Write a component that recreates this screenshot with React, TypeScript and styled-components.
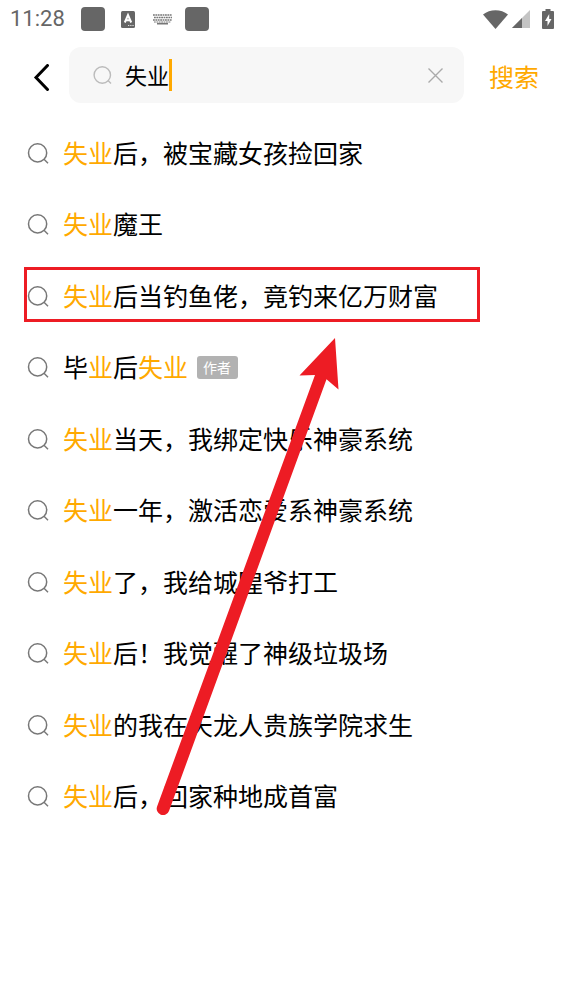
import React, { useState } from 'react';
import styled, { createGlobalStyle } from 'styled-components';

const GlobalStyle = createGlobalStyle`
  * { box-sizing: border-box; }
  body {
    margin: 0;
    background: #fff;
    color: #000;
    font-family: "Noto Sans CJK SC", sans-serif;
  }
  button, input { font: inherit; }
`;

const accent = '#ffa900';
const statusGrey = '#666';
const markRed = '#ed1c24';

const Page = styled.div`
  min-height: 100vh;
  background: #fff;
`;

const StatusBar = styled.div`
  display: flex;
  align-items: center;
  justify-content: space-between;
  height: 38px;
  padding: 0 10px;
  color: ${statusGrey};
`;

const StatusGroup = styled.div`
  display: flex;
  align-items: center;
`;

const Clock = styled.time`
  width: 71px;
  font-family: Roboto, sans-serif;
  font-size: 22px;
  line-height: 38px;
`;

const AppSquare = styled.span`
  width: 24px;
  height: 24px;
  border-radius: 4px;
  background: ${statusGrey};
`;

const StatusIcon = styled.svg<{ $gap: number }>`
  display: block;
  margin-left: ${(p) => p.$gap}px;
`;

const KeyboardIcon = styled(StatusIcon)`
  margin-right: 13px;
`;

const Header = styled.header`
  display: flex;
  align-items: center;
  height: 80px;
  padding: 9px 25px 15px 28px;
`;

const BackButton = styled.button`
  display: flex;
  align-items: center;
  width: 41px;
  height: 56px;
  padding: 4px 0 0 4px;
  border: 0;
  background: none;
`;

const SearchForm = styled.form`
  display: flex;
  flex: 1;
  align-items: center;
  min-width: 0;
`;

const Field = styled.div`
  display: flex;
  flex: 1;
  align-items: center;
  min-width: 0;
  height: 56px;
  padding: 0 20px 0 24px;
  border-radius: 12px;
  background: #f7f7f7;
`;

const InputWrap = styled.div`
  position: relative;
  flex: 1;
  min-width: 0;
  height: 32px;
  margin-left: 11px;
`;

const Input = styled.input`
  display: block;
  width: 100%;
  height: 30px;
  padding: 0;
  border: 0;
  outline: 0;
  background: none;
  color: #000;
  font-size: 22px;
  line-height: 30px;
  caret-color: transparent;
`;

const Caret = styled.span`
  position: absolute;
  top: 0;
  left: 44px;
  width: 3px;
  height: 32px;
  background: ${accent};
`;

const ClearButton = styled.button`
  display: flex;
  padding: 0;
  border: 0;
  background: none;
`;

const SubmitButton = styled.button`
  margin-left: 25px;
  padding: 2px 0 0;
  border: 0;
  background: none;
  color: ${accent};
  font-size: 25px;
  line-height: 36px;
`;

const Results = styled.main`
  position: relative;
`;

const List = styled.ul`
  display: grid;
  grid-auto-rows: 1fr;
  min-height: 715px;
  margin: 0;
  padding: 0;
  list-style: none;
`;

const Item = styled.li`
  display: flex;
`;

const ItemLink = styled.a`
  display: flex;
  flex: 1;
  align-items: center;
  padding: 0 27px;
  color: #000;
  font-size: 25px;
  line-height: 36px;
  text-decoration: none;
  white-space: nowrap;
`;

const ItemText = styled.span`
  margin-left: 13px;
  padding-bottom: 4px;
`;

const Highlight = styled.span`
  color: ${accent};
`;

const Tag = styled.span`
  margin: 0 0 1px 9px;
  padding: 0 7px 0 6px;
  border-radius: 3px;
  background: #b2b2b2;
  color: #fff;
  font-size: 14px;
  line-height: 23px;
`;

const MarkBox = styled.div`
  position: absolute;
  top: 149px;
  left: 24px;
  width: 456px;
  height: 55px;
  border: 3px solid ${markRed};
  pointer-events: none;
`;

const MarkArrow = styled.svg`
  position: absolute;
  top: 220px;
  left: 156px;
  pointer-events: none;
`;

const SearchIcon = ({ color }: { color: string }) => (
  <svg width="23" height="24" viewBox="0 0 23 24" fill="none" stroke={color} strokeWidth="1.5" aria-hidden="true">
    <circle cx="10.6" cy="10.9" r="9.1" />
    <path d="M17 17.2l4 4" />
  </svg>
);

const FieldSearchIcon = () => (
  <svg width="21" height="21" viewBox="0 0 21 21" fill="none" stroke="#bbb" strokeWidth="1.4" aria-hidden="true">
    <circle cx="9.3" cy="10" r="8.2" />
    <path d="M15 15.6l3 3" />
  </svg>
);

type Part = string | { hit: string };

const results: { parts: Part[]; tag?: string }[] = [
  { parts: [{ hit: '失业' }, '后，被宝藏女孩捡回家'] },
  { parts: [{ hit: '失业' }, '魔王'] },
  { parts: [{ hit: '失业' }, '后当钓鱼佬，竟钓来亿万财富'] },
  { parts: ['毕', { hit: '业' }, '后', { hit: '失业' }], tag: '作者' },
  { parts: [{ hit: '失业' }, '当天，我绑定快乐神豪系统'] },
  { parts: [{ hit: '失业' }, '一年，激活恋爱系神豪系统'] },
  { parts: [{ hit: '失业' }, '了，我给城隍爷打工'] },
  { parts: [{ hit: '失业' }, '后！我觉醒了神级垃圾场'] },
  { parts: [{ hit: '失业' }, '的我在天龙人贵族学院求生'] },
  { parts: [{ hit: '失业' }, '后，回家种地成首富'] },
];

export default function App() {
  const [query, setQuery] = useState('失业');

  return (
    <Page lang="zh-CN">
      <GlobalStyle />
      <StatusBar>
        <StatusGroup>
          <Clock>11:28</Clock>
          <AppSquare />
          <StatusIcon $gap={16} width="14" height="17" viewBox="0 0 14 17" aria-hidden="true">
            <rect width="14" height="17" rx="1.5" fill={statusGrey} />
            <path d="M3.8 11.5L7 4l3.2 7.5M4.8 9.3h4.4" fill="none" stroke="#fff" strokeWidth="2" />
            <path d="M7 14.5h1.3M9.2 14.5h1.3M11.4 14.5h1.3" stroke="#ddd" />
          </StatusIcon>
          <KeyboardIcon $gap={18} width="19" height="11" viewBox="0 0 19 11" fill="none" stroke="#777" aria-hidden="true">
            <path d="M0 1h19M1 3.5h18M0 6h19" strokeWidth="1.7" strokeDasharray="1.8 .6" />
            <path d="M1 8h17" strokeWidth="1" strokeDasharray="1.8 .6" />
            <path d="M4 9.7h11" strokeWidth="1.6" />
          </KeyboardIcon>
          <AppSquare />
        </StatusGroup>
        <StatusGroup>
          <StatusIcon $gap={0} width="25" height="19" viewBox="0 0 25 19" fill={statusGrey} aria-hidden="true">
            <path d="M0 4.5C7-1.3 18-1.3 25 4.5L12.5 19z" />
          </StatusIcon>
          <StatusIcon $gap={4} width="18" height="18" viewBox="0 0 18 18" aria-hidden="true">
            <path d="M18 0v18H0z" fill="#c4c4c4" />
            <path d="M10 8v10H0z" fill={statusGrey} />
          </StatusIcon>
          <StatusIcon $gap={12} width="12" height="20" viewBox="0 0 12 20" aria-hidden="true">
            <path d="M3.5 0h5v2H11a1 1 0 0 1 1 1v16a1 1 0 0 1-1 1H1a1 1 0 0 1-1-1V3a1 1 0 0 1 1-1h2.5z" fill={statusGrey} />
            <path d="M7.2 5L3 12h2.500v5L9.500 10H7.200z" fill="#fff" />
          </StatusIcon>
        </StatusGroup>
      </StatusBar>

      <Header>
        <BackButton type="button" aria-label="返回">
          <svg width="18" height="27" viewBox="0 0 18 27" fill="none" stroke="#000" strokeWidth="3" aria-hidden="true">
            <path d="M15.5 1.5L4 13.5l11.5 12" strokeLinecap="round" />
          </svg>
        </BackButton>
        <SearchForm role="search" onSubmit={(e) => e.preventDefault()}>
          <Field>
            <FieldSearchIcon />
            <InputWrap>
              <Input aria-label="搜索" value={query} onChange={(e) => setQuery(e.target.value)} />
              <Caret />
            </InputWrap>
            <ClearButton type="button" aria-label="清除" onClick={() => setQuery('')}>
              <svg width="17" height="17" viewBox="0 0 17 17" stroke="#aaa" strokeWidth="1.4" aria-hidden="true">
                <path d="M1.5 1.5l14 14M15.5 1.5l-14 14" />
              </svg>
            </ClearButton>
          </Field>
          <SubmitButton type="submit">搜索</SubmitButton>
        </SearchForm>
      </Header>

      <Results>
        <List>
          {results.map((result, i) => (
            <Item key={i}>
              <ItemLink href="#">
                <SearchIcon color="#777" />
                <ItemText>
                  {result.parts.map((part, j) =>
                    typeof part === 'string' ? part : <Highlight key={j}>{part.hit}</Highlight>
                  )}
                </ItemText>
                {result.tag && <Tag>{result.tag}</Tag>}
              </ItemLink>
            </Item>
          ))}
        </List>
        <MarkBox />
        <MarkArrow width="184" height="480" viewBox="0 0 184 480" fill={markRed} aria-hidden="true">
          <path d="M179 0L182.5 51.5L170.5 41.2L13 473A6.3 6.3 0 0 1 1.1 468.5L159 37L143.5 37.5Z" />
        </MarkArrow>
      </Results>
    </Page>
  );
}
